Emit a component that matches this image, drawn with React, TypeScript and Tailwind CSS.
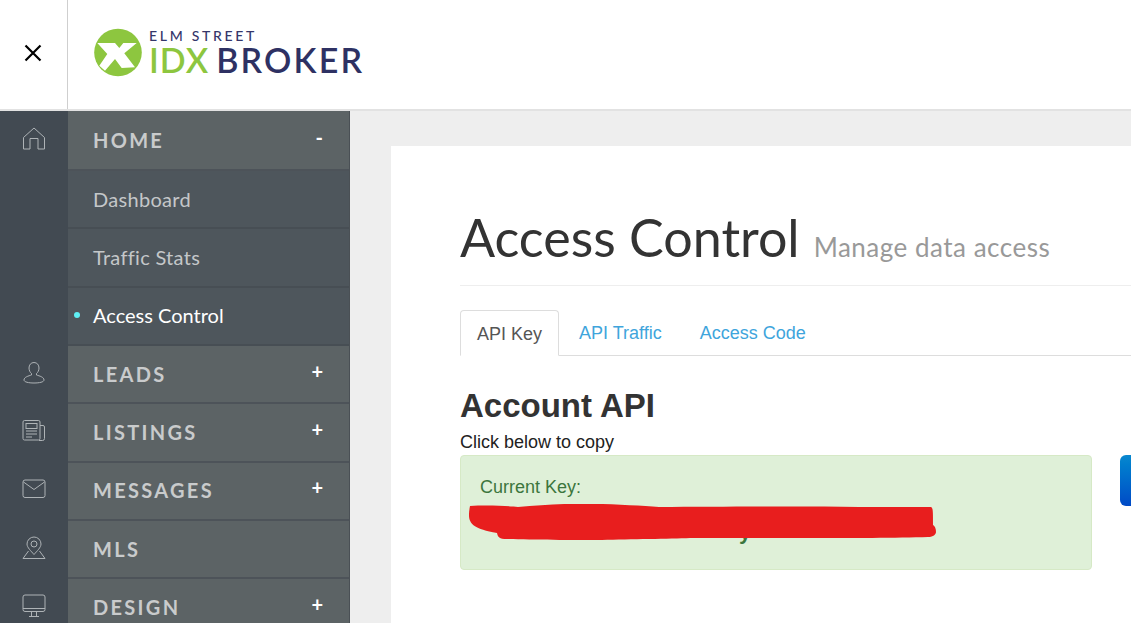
const menu = [
  { label: 'HOME', sign: '-', kind: 'head' },
  { label: 'Dashboard', kind: 'sub' },
  { label: 'Traffic Stats', kind: 'sub' },
  { label: 'Access Control', kind: 'active' },
  { label: 'LEADS', sign: '+', kind: 'head' },
  { label: 'LISTINGS', sign: '+', kind: 'head' },
  { label: 'MESSAGES', sign: '+', kind: 'head' },
  { label: 'MLS', kind: 'head' },
  { label: 'DESIGN', sign: '+', kind: 'head' },
];

function RailIcon({ name }: { name: string }) {
  const common = {
    width: 24,
    height: 24,
    viewBox: '0 0 24 24',
    fill: 'none',
    stroke: '#aeb3b6',
    strokeWidth: 1,
  };
  if (name === 'HOME') {
    return (
      <svg {...common}>
        <path d="M1.500 10.500 12 1l10.500 9.500V22h-6.500v-10.500H8V22H1.500z" />
      </svg>
    );
  }
  if (name === 'LEADS') {
    return (
      <svg {...common}>
        <path d="M12 1.500c3.200 0 5 2.500 5 5.500 0 2.500-1.200 4.500-2.500 5.500v1.500c3 1 7.500 2 7.500 5 0 2-4.500 3-10 3s-10-1-10-3c0-3 4.500-4 7.500-5v-1.500C8.200 11.500 7 9.500 7 7c0-3 1.800-5.500 5-5.500z" />
      </svg>
    );
  }
  if (name === 'LISTINGS') {
    return (
      <svg {...common}>
        <rect x="1" y="1.500" width="17" height="19.500" rx="1.500" />
        <path d="M18 6.500h3a1.500 1.500 0 0 1 1.500 1.500v11.500a2 2 0 0 1-2 2H17" />
        <rect x="4" y="4.500" width="11" height="5" />
        <path d="M4 12h11M4 15h11M4 18h6" />
      </svg>
    );
  }
  if (name === 'MESSAGES') {
    return (
      <svg {...common}>
        <rect x="1" y="3" width="22" height="17.500" rx="2" />
        <path d="M1.500 5 12 12.500 22.500 5" />
      </svg>
    );
  }
  if (name === 'MLS') {
    return (
      <svg {...common}>
        <path d="M12 18.500c-3-3.500-7-7-7-10.500a7 7 0 0 1 14 0c0 3.500-4 7-7 10.500z" />
        <circle cx="12" cy="8" r="3" />
        <path d="M6.500 15 1 22.500h22L17.500 15" />
      </svg>
    );
  }
  return (
    <svg {...common}>
      <rect x="1" y="1" width="22" height="16.500" rx="2" />
      <path d="M1 14.500h22M9.500 17.500v4.500M14.500 17.500v4.500M7 22.500h10" />
    </svg>
  );
}

function Logo() {
  return (
    <div className="flex items-start ml-[26px] mt-[28px]">
      <svg width="50" height="50" viewBox="0 0 50 50" className="shrink-0">
        <circle cx="24" cy="24.500" r="23.800" fill="#8dc63f" />
        <path d="M3.300 15H21l4.300 5 4-5h13.400L30.300 25.300 41 39.300 27.700 40 21 31 11 42.700 5.300 37.700 13.300 26z" fill="#fff" />
      </svg>
      <div className="ml-[5px] font-['Lato',sans-serif] leading-none">
        <div className="text-[14px] h-[15px] mt-[1px] tracking-[2.700px] font-medium text-[#35366a] whitespace-nowrap">ELM STREET</div>
        <div className="text-[34px] mt-[-1px] font-semibold whitespace-nowrap">
          <span className="text-[#8dc63f] tracking-[1px] mr-[7px]">IDX</span>
          <span className="text-[#2e3163] tracking-[2.200px]">BROKER</span>
        </div>
      </div>
    </div>
  );
}

export default function App() {
  return (
    <div className="h-screen overflow-hidden flex flex-col font-['Lato',sans-serif]">
      <header className="h-[111px] shrink-0 flex bg-white border-b-2 border-[#e2e2e2]">
        <div className="w-[68px] flex items-center justify-center border-r border-[#cfcfcf] pb-[3px] pr-[2px]">
          <svg width="18" height="18" viewBox="0 0 18 18" stroke="#000" strokeWidth="2.200">
            <path d="M1.500 1.500l15 15M16.500 1.500l-15 15" />
          </svg>
        </div>
        <Logo />
      </header>

      <div className="flex flex-1 min-h-0">
        <aside className="w-[68px] shrink-0 bg-[#424a52] flex flex-col">
          {menu.map((item) => (
            <div key={item.label} className="h-[58.330px] first:h-[60px] shrink-0 flex items-center justify-center pb-[5px]">
              {item.kind === 'head' && <RailIcon name={item.label} />}
            </div>
          ))}
        </aside>

        <nav className="w-[282px] shrink-0 flex flex-col border-r border-[#4a5055]">
          {menu.map((item) =>
            item.kind === 'head' ? (
              <div
                key={item.label}
                className="h-[58.330px] first:h-[60px] shrink-0 flex items-center justify-between pl-[25px] pr-[26px] pb-[1px] bg-[#5c6365] border-b-2 border-[#4d5359]"
              >
                <span className="text-[20px] font-bold tracking-[2.300px] text-[#c9cbcc]">{item.label}</span>
                {item.sign && (
                  <span className="text-[20px] leading-none font-bold text-white -mt-[6px]">{item.sign}</span>
                )}
              </div>
            ) : (
              <div
                key={item.label}
                className="relative h-[58.330px] shrink-0 flex items-center pl-[25px] pb-[1px] bg-[#4e565c] border-b-2 border-[#474e54]"
              >
                {item.kind === 'active' && (
                  <span className="absolute left-[6px] top-[24px] w-[6px] h-[6px] rounded-full bg-[#5ff0f5]" />
                )}
                <span className={`text-[20px] ${item.kind === 'active' ? 'text-white' : 'text-[#c4c7c9] tracking-[0.300px]'}`}>
                  {item.label}
                </span>
              </div>
            ),
          )}
        </nav>

        <main className="flex-1 min-w-0 bg-[#eeeeee] pl-[41px] pt-[35px] overflow-hidden">
          <div className="w-[900px] h-[600px] bg-white pl-[69px] pt-[60px]">
            <div className="h-[80px] border-b border-[#eeeeee] flex items-baseline whitespace-nowrap w-[671px]">
              <h1 className="text-[52px] leading-[62px] font-normal text-[#333333]">Access Control</h1>
              <span className="ml-[14px] text-[26px] tracking-[0.500px] text-[#999999]">Manage data access</span>
            </div>

            <div className="mt-[24px] h-[46px] flex border-b border-[#dddddd] w-[671px] font-['Liberation_Sans',sans-serif] text-[18px]">
              <div className="w-[99px] h-[46px] pt-[2px] bg-white border border-[#dddddd] border-b-white rounded-t-[4px] flex items-center justify-center text-[#555555]">
                API Key
              </div>
              <div className="ml-[20px] h-[45px] pt-[2px] flex items-center text-[#3fa5dc]">API Traffic</div>
              <div className="ml-[38px] h-[45px] pt-[2px] flex items-center text-[#3fa5dc]">Access Code</div>
            </div>

            <div className="font-['Liberation_Sans',sans-serif] text-[#333333]">
              <h2 className="mt-[30px] text-[33px] leading-[40px] font-bold">Account API</h2>
              <p className="text-[18px] leading-[20px] mt-[6px] text-[#222222]">Click below to copy</p>
              <div className="flex items-start mt-[3px]">
                <div className="relative w-[632px] h-[115px] shrink-0 bg-[#dff0d8] border border-[#d6e9c6] rounded-[4px] pl-[19px] pt-[20px] text-[#3c763d] text-[18px] leading-[22px]">
                  Current Key:
                  <span className="absolute left-[278px] top-[65px] text-[22px] font-bold leading-none">y</span>
                  <svg className="absolute left-[7px] top-[48px]" width="472" height="40" viewBox="0 0 472 40">
                    <path
                      d="M2 2C20 1 40 2 50 3 75 1 100-1 125 0c25 0 50 2 66 3 60 0 130-1 200 0l71 0c3 0 3 2 3 18 3 2 3 6 3 7 0 3-4 5-8 5-30 1-80 1-115 1-40 0-90 0-123 0-20 1-60 1-88 2-30 0-70 0-95-1-8 0-9-2-10-6C1 24-1 18 2 2z"
                      fill="#e81e1e"
                    />
                  </svg>
                </div>
                <div className="ml-[28px] w-[60px] h-[51px] shrink-0 rounded-[6px] bg-gradient-to-b from-[#0a88cf] to-[#0049c6]" />
              </div>
            </div>
          </div>
        </main>
      </div>
    </div>
  );
}
